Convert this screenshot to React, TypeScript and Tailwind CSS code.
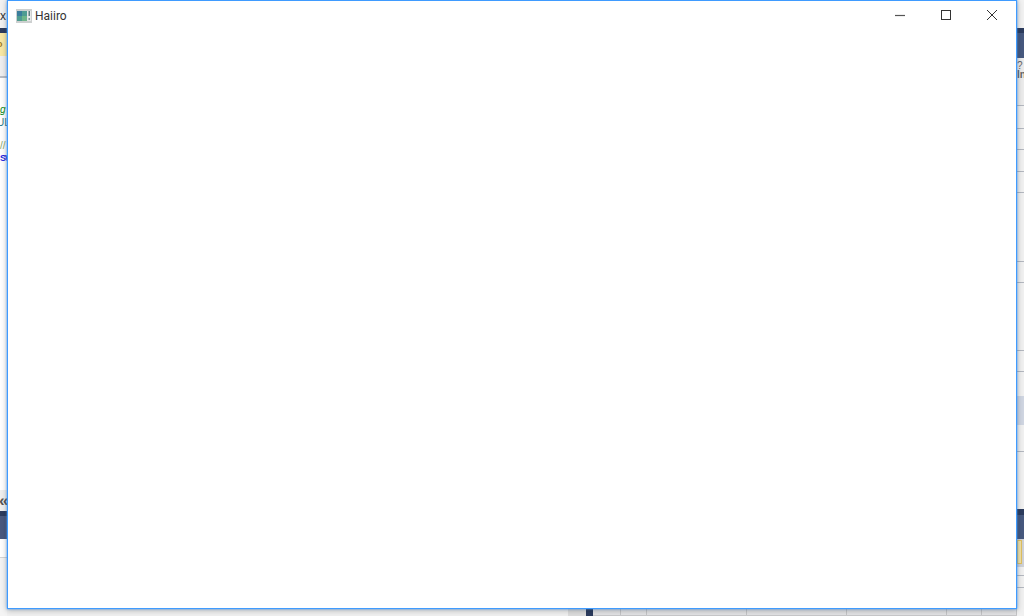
const sans = "font-['Liberation_Sans',sans-serif]";

function LeftStrip() {
  return (
    <div className={`flex w-[7px] shrink-0 flex-col overflow-hidden ${sans}`}>
      <div className="flex h-[28px] items-end bg-[#f2f2f2] pb-[6px] text-[12px] leading-[12px] text-[#333]">
        x
      </div>
      <div className="h-[5px] bg-[#2c3c5e]" />
      <div className="flex h-[23px] items-center bg-[#f8e8a4] text-[9px] font-bold leading-[9px] text-[#a07a20]">
        <span className="-ml-[3px]">o</span>
      </div>
      <div className="h-[20px] bg-[#efeff0]" />
      <div className="h-[2px] bg-[#b9bdc5]" />
      <div className="flex h-[412px] flex-col bg-white pt-[25px] text-[10px] leading-[13px]">
        <div className="flex h-[13px] gap-[1px] text-[#0a8a20]">
          <span className="italic">g</span>
          <span>.</span>
        </div>
        <div className="-ml-[3px] h-[13px] text-[#2a7a8a]">UL</div>
        <div className="h-[10px]" />
        <div className="h-[13px] text-[#8aa86a]">//</div>
        <div className="h-[13px] text-[9px] font-bold tracking-[-1px] text-[#2222dd]">SW</div>
      </div>
      <div className="flex h-[21px] items-center bg-[#f0f0f0] text-[17px] font-bold leading-[15px] text-[#555]">
        <span className="-ml-[1px]">«</span>
      </div>
      <div className="h-[5px] bg-[#2c3c5e]" />
      <div className="h-[23px] bg-[#49597f]" />
      <div className="h-[18px] bg-white" />
      <div className="h-px bg-[#d4d4d4]" />
      <div className="h-[58px] bg-[#f4f4f4]" />
    </div>
  );
}

function RightStrip() {
  const line = "h-px bg-[#b4b8c0]";
  const gap = "bg-[#f1f1f1]";
  return (
    <div className={`flex w-[7px] shrink-0 flex-col overflow-hidden ${sans}`}>
      <div className="h-[28px] bg-[#f2f2f2]" />
      <div className="h-[5px] bg-[#2c3c5e]" />
      <div className="h-[25px] bg-[#47597f]" />
      <div className="flex h-[47px] flex-col bg-[#ececec] pt-[3px] text-[10px] leading-[9px] text-[#666]">
        <span>?</span>
        <span className="font-bold">In</span>
      </div>
      <div className={line} />
      <div className={`h-[22px] ${gap}`} />
      <div className={line} />
      <div className={`h-[20px] ${gap}`} />
      <div className={line} />
      <div className={`h-[21px] ${gap}`} />
      <div className={line} />
      <div className={`h-[20px] ${gap}`} />
      <div className={line} />
      <div className={`h-[68px] ${gap}`} />
      <div className={line} />
      <div className={`h-[20px] ${gap}`} />
      <div className={line} />
      <div className={`h-[68px] ${gap}`} />
      <div className={line} />
      <div className={`h-[20px] ${gap}`} />
      <div className={line} />
      <div className={`h-[24px] ${gap}`} />
      <div className="h-[29px] bg-[#d0d6e2]" />
      <div className={`h-[26px] ${gap}`} />
      <div className={line} />
      <div className={`h-[57px] ${gap}`} />
      <div className="h-[6px] bg-[#2c3c5e]" />
      <div className="h-[24px] bg-[#47597f]" />
      <div className="flex h-[28px] items-start bg-[#cfd2d8] pt-[1px]">
        <div className="h-[24px] w-[5px] border border-[#e0c060] bg-[#f2e2a8]" />
      </div>
      <div className={`h-[8px] ${gap}`} />
      <div className={line} />
      <div className={`h-[11px] ${gap}`} />
      <div className={line} />
      <div className={`h-[28px] ${gap}`} />
    </div>
  );
}

function BottomStrip() {
  const cell = "h-full border-r border-[#c4c4c6] bg-[#e2e2e4]";
  return (
    <div className="flex h-[7px] items-stretch bg-[#f0f0f0]">
      <div className="w-[561px]" />
      <div className="w-[18px] bg-[#dcdcdc]" />
      <div className="w-[7px] bg-[#2c3c5e]" />
      <div className="flex flex-1 flex-col">
        <div className="flex h-[6px]">
          <div className={`w-[28px] ${cell}`} />
          <div className={`w-[26px] ${cell}`} />
          <div className={`w-[100px] ${cell}`} />
          <div className={`w-[100px] ${cell}`} />
          <div className={`w-[100px] ${cell}`} />
          <div className={`w-[35px] ${cell}`} />
          <div className={`flex-1 ${cell}`} />
        </div>
        <div className="h-px bg-[#c8c8ca]" />
      </div>
    </div>
  );
}

function WindowButton({ children }: { children: React.ReactNode }) {
  return <div className="flex h-[28px] w-[46px] items-center justify-center">{children}</div>;
}

function AppIcon() {
  return (
    <svg width="16" height="14" viewBox="0 0 16 14" className="shrink-0">
      <rect x="0" y="0" width="16" height="14" fill="#cdd0d0" />
      <rect x="1" y="2" width="10" height="10" fill="#4f9c92" />
      <rect x="1" y="2" width="5" height="5" fill="#3a7d9c" />
      <rect x="6" y="7" width="5" height="5" fill="#6fb58a" />
      <rect x="11" y="2" width="4" height="10" fill="#e6e8e8" />
      <rect x="12.5" y="2" width="1.5" height="5" fill="#5f7f80" />
      <rect x="12.5" y="9" width="1.5" height="2" fill="#7f9a9a" />
    </svg>
  );
}

export default function App() {
  return (
    <div className="relative h-[616px] w-[1024px] overflow-hidden bg-[#f0f0f0]">
      <div className="flex h-[616px]">
        <LeftStrip />
        <div className="flex flex-1 flex-col justify-end">
          <BottomStrip />
        </div>
        <RightStrip />
      </div>

      {/* Top-level window floating over the desktop */}
      <div className="absolute left-[7px] top-0 flex h-[609px] w-[1010px] flex-col border border-[#3f9bff] bg-white shadow-[0_0_2px_#4aa0ff,0_1px_6px_rgba(0,0,0,0.3)]">
        <div className="flex h-[28px] items-start justify-between pr-[1px]">
          <div className="flex items-center gap-[3px] pl-[8px] pt-[8px] font-['Roboto',sans-serif] text-[12px] leading-[14px] text-[#333]">
            <AppIcon />
            <span>Haiiro</span>
          </div>
          <div className="flex">
            <WindowButton>
              <svg width="10" height="10" viewBox="0 0 10 10">
                <path d="M0 5.5H10" stroke="#555" strokeWidth="1.2" />
              </svg>
            </WindowButton>
            <WindowButton>
              <svg width="10" height="10" viewBox="0 0 10 10">
                <rect x="0.5" y="0.5" width="9" height="9" fill="none" stroke="#333" strokeWidth="1" />
              </svg>
            </WindowButton>
            <WindowButton>
              <svg width="10" height="10" viewBox="0 0 10 10">
                <path d="M0 0L10 10M10 0L0 10" stroke="#333" strokeWidth="1" />
              </svg>
            </WindowButton>
          </div>
        </div>
      </div>
    </div>
  );
}
